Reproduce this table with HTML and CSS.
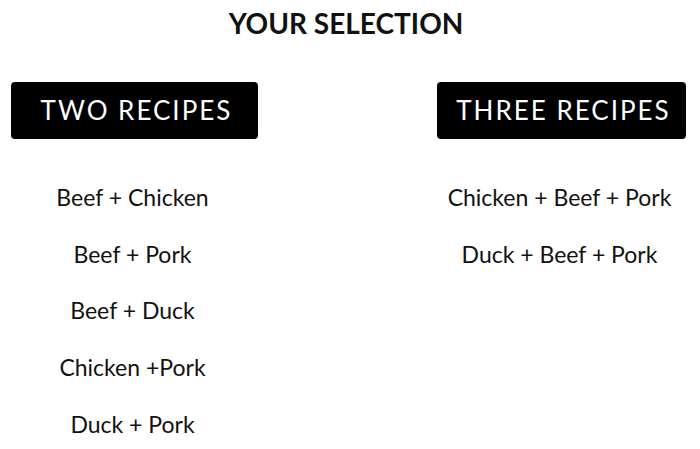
FILE: index.html
```html
<!DOCTYPE html>
<html>
<head>
<meta charset="utf-8">
<link rel="stylesheet" href="styles.css">
</head>
<body>
<div class="page">
  <h1 class="title">YOUR SELECTION</h1>
  <div class="columns">
    <div class="col col-left">
      <div class="btn">TWO RECIPES</div>
      <ul class="list">
        <li>Beef + Chicken</li>
        <li>Beef + Pork</li>
        <li>Beef + Duck</li>
        <li>Chicken +Pork</li>
        <li>Duck + Pork</li>
      </ul>
    </div>
    <div class="col col-right">
      <div class="btn">THREE RECIPES</div>
      <ul class="list">
        <li>Chicken + Beef + Pork</li>
        <li>Duck + Beef + Pork</li>
      </ul>
    </div>
  </div>
</div>
</body>
</html>
```
FILE: styles.css
```css
html, body {
  margin: 0;
  padding: 0;
  background: #ffffff;
}
body {
  font-family: Lato, "Liberation Sans", sans-serif;
  color: #111111;
}
.page {
  width: 700px;
  height: 449px;
  overflow: hidden;
}
.title {
  margin: 0;
  padding-top: 6px;
  height: 34px;
  line-height: 34px;
  font-size: 28px;
  font-weight: 700;
  text-align: center;
  color: #111111;
  padding-right: 8px;
}
.columns {
  display: flex;
  gap: 179px;
  padding-left: 11px;
  margin-top: 42px;
}
.col {
  display: flex;
  flex-direction: column;
  align-items: center;
}
.col-left { width: 247px; }
.col-right { width: 249px; }
.btn {
  width: 100%;
  height: 57px;
  background: #000000;
  color: #ffffff;
  border-radius: 4px;
  display: flex;
  align-items: center;
  justify-content: center;
  font-size: 26px;
  letter-spacing: 2px;
  font-weight: 400;
  padding: 0 0 2px 4px;
  box-sizing: border-box;
}
.list {
  list-style: none;
  margin: 0;
  padding: 0 4px 0 0;
  margin-top: 44px;
  display: flex;
  flex-direction: column;
  align-items: center;
}
.list li {
  font-size: 23px;
  height: 56.7px;
  line-height: 28px;
  color: #111111;
}
```
